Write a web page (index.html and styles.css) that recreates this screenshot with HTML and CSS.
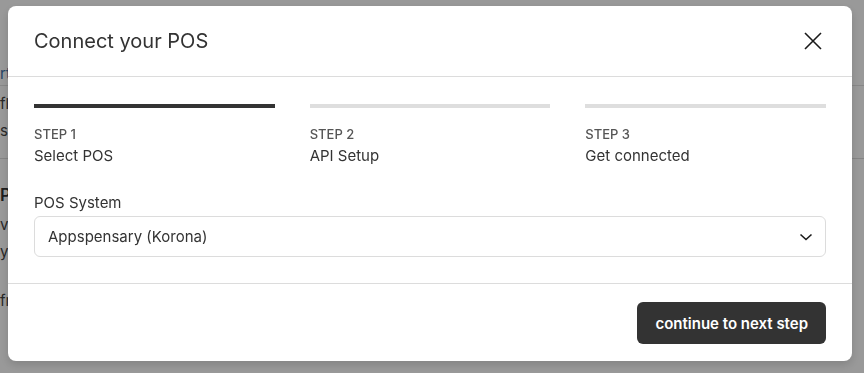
FILE: index.html
```html
<!DOCTYPE html>
<html lang="en">

<head>
  <meta charset="UTF-8" />
  <meta name="viewport" content="width=device-width, initial-scale=1.0" />
  <link rel="stylesheet" href="styles.css">
  <title>Connect your POS</title>
</head>

<body>
  <div class="page">
    <div class="page-head">rt</div>
    <p class="page-text">flow settings for your store</p>
    <p class="page-text">sync inventory</p>
    <hr class="page-rule">
    <h3 class="page-title">POS connection</h3>
    <p class="page-text">view connected systems</p>
    <p class="page-text">y last sync</p>
    <p class="page-text low">from your point of sale</p>
  </div>

  <div class="overlay">
    <div class="modal">
      <div class="modal-header">
        <h2 class="modal-title">Connect your POS</h2>
        <button class="close">
          <svg width="20" height="20" viewBox="0 0 20 20">
            <path d="M2 2L18 18M18 2L2 18" stroke="#1a1a1a" stroke-width="1.6" fill="none" />
          </svg>
        </button>
      </div>

      <div class="modal-body">
        <div class="steps">
          <div class="step active">
            <div class="step-bar"></div>
            <div class="step-num">Step 1</div>
            <div class="step-name">Select POS</div>
          </div>
          <div class="step">
            <div class="step-bar"></div>
            <div class="step-num">Step 2</div>
            <div class="step-name">API Setup</div>
          </div>
          <div class="step">
            <div class="step-bar"></div>
            <div class="step-num">Step 3</div>
            <div class="step-name">Get connected</div>
          </div>
        </div>

        <label class="field-label">POS System</label>
        <div class="select">
          <span>Appspensary (Korona)</span>
          <svg width="14" height="8" viewBox="0 0 14 8">
            <path d="M1.5 1.5L7 6.5L12.5 1.5" stroke="#1a1a1a" stroke-width="1.6" fill="none" />
          </svg>
        </div>
      </div>

      <div class="modal-footer">
        <button class="btn">continue to next step</button>
      </div>
    </div>
  </div>
</body>

</html>
```

FILE: styles.css
```css
*,
*::after,
*::before {
  box-sizing: border-box;
  font-family: Inter, "Liberation Sans", sans-serif;
}

body {
  margin: 0;
  background-color: white;
  color: #333;
}

/* page behind the dialog */
.page {
  padding-top: 64px;
}

.page-head {
  font-size: 15px;
  color: #3d6fa8;
  border-bottom: 1px solid #e2e2e2;
  padding-bottom: 2px;
}

.page-text {
  font-size: 15px;
  margin: 8px 0 6px;
  color: #444;
}

.page-text.low {
  margin-top: 30px;
}

.page-rule {
  border: none;
  border-top: 1px solid #ddd;
  margin: 18px 0 26px;
}

.page-title {
  font-size: 17px;
  margin: 0 0 10px;
  font-weight: 600;
}

/* dialog */
.overlay {
  position: fixed;
  inset: 0;
  background-color: rgba(0, 0, 0, 0.4);
  padding: 6px 12px 0 8px;
}

.modal {
  background-color: white;
  border-radius: 8px;
  box-shadow: 0 4px 10px rgba(0, 0, 0, 0.15);
  width: 844px;
}

.modal-header {
  height: 71px;
  border-bottom: 1px solid #dcdcdc;
  display: flex;
  align-items: center;
  justify-content: space-between;
  padding: 0 26px;
}

.modal-title {
  margin: 0 0 1px;
  font-size: 20px;
  font-weight: 400;
  color: #333;
}

.close {
  border: none;
  background: none;
  padding: 0;
  width: 20px;
  height: 20px;
  margin-right: 3px;
  cursor: pointer;
}

.modal-body {
  padding: 27px 26px 26px;
}

.steps {
  display: grid;
  grid-template-columns: repeat(3, 1fr);
  gap: 35px;
  margin-bottom: 25px;
}

.step-bar {
  height: 4px;
  background-color: #dedede;
  margin-bottom: 17px;
}

.step.active .step-bar {
  background-color: #333;
}

.step-num {
  font-size: 13px;
  line-height: 18px;
  font-weight: 500;
  text-transform: uppercase;
  color: #555;
}

.step-name {
  font-size: 15px;
  line-height: 22px;
  margin-top: 2px;
  color: #333;
}

.field-label {
  display: block;
  font-size: 15px;
  line-height: 22px;
  margin-bottom: 2px;
  color: #333;
}

.select {
  height: 41px;
  border: 1px solid #dcdcdc;
  border-radius: 6px;
  display: flex;
  align-items: center;
  justify-content: space-between;
  padding: 0 12px 0 13px;
  font-size: 15px;
  color: #333;
}

.modal-footer {
  border-top: 1px solid #dcdcdc;
  padding: 18px 26px 17px;
  display: flex;
  justify-content: flex-end;
}

.btn {
  height: 42px;
  padding: 0 18px;
  border: none;
  border-radius: 6px;
  background-color: #333;
  color: white;
  font-size: 15px;
  font-weight: 600;
  cursor: pointer;
}
```
